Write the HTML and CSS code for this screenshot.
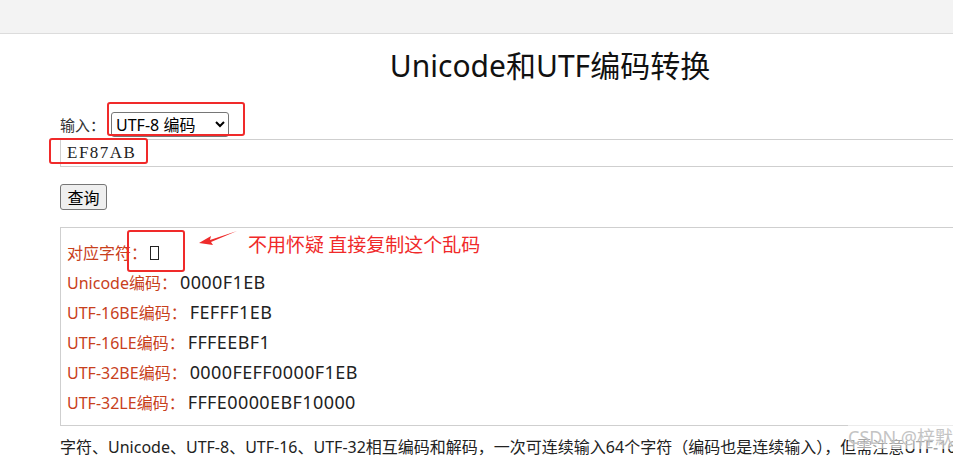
FILE: index.html
```html
<!DOCTYPE html>
<html lang="zh-CN">
<head>
    <meta charset="UTF-8">
    <meta name="viewport" content="width=device-width, initial-scale=1.0">
    <title>Unicode和UTF编码转换</title>
    <link rel="stylesheet" href="styles.css">
</head>
<body>
    <div class="top-bar"></div>

    <div class="tool-container">
        <h1 class="tool-title">Unicode和UTF编码转换</h1>

        <div class="input-row">
            <label for="input-type">输入：</label>
            <select id="input-type" class="type-select">
                <option>UTF-8 编码</option>
                <option>字符</option>
                <option>Unicode编码</option>
            </select>
        </div>
        <input type="text" class="code-input" value="EF87AB">

        <button class="query-btn">查询</button>

        <div class="result-box">
            <div class="result-row"><span class="result-label">对应字符：</span><span class="result-value"><span class="tofu"></span></span></div>
            <div class="result-row"><span class="result-label">Unicode编码：</span><span class="result-value">0000F1EB</span></div>
            <div class="result-row"><span class="result-label">UTF-16BE编码：</span><span class="result-value">FEFFF1EB</span></div>
            <div class="result-row"><span class="result-label">UTF-16LE编码：</span><span class="result-value">FFFEEBF1</span></div>
            <div class="result-row"><span class="result-label">UTF-32BE编码：</span><span class="result-value">0000FEFF0000F1EB</span></div>
            <div class="result-row"><span class="result-label">UTF-32LE编码：</span><span class="result-value">FFFE0000EBF10000</span></div>
        </div>

        <p class="tool-desc">字符、Unicode、UTF-8、UTF-16、UTF-32相互编码和解码，一次可连续输入64个字符（编码也是连续输入），但需注意UTF-16编码时的字节顺序。</p>
    </div>

    <!-- screenshot annotations -->
    <div class="mark mark-select"></div>
    <div class="mark mark-input"></div>
    <div class="mark mark-char"></div>
    <svg class="mark-arrow" width="44" height="20" viewBox="0 0 44 20">
        <path d="M39 2 L12 11 L13 7 L1 14 L15 16 L13 13 Z" fill="#ee2b2b"/>
    </svg>
    <div class="mark-note">不用怀疑 直接复制这个乱码</div>
    <div class="watermark">CSDN @梓默</div>
</body>
</html>
```

FILE: styles.css
```css
* {
    margin: 0;
    padding: 0;
    box-sizing: border-box;
}

body {
    font-family: "Noto Sans", "Noto Sans CJK SC", sans-serif;
    background: #fff;
    color: #333;
    overflow: hidden;
    height: 456px;
    position: relative;
}

.top-bar {
    height: 34px;
    background: #f3f3f3;
    border-bottom: 1px solid #dcdcdc;
}

.tool-container {
    width: 980px;
    margin-left: 60px;
}

.tool-title {
    text-align: center;
    font-size: 30px;
    font-weight: 400;
    line-height: 36px;
    color: #111;
    margin-top: 14px;
}

.input-row {
    display: flex;
    align-items: center;
    margin-top: 28px;
    height: 25px;
    font-size: 15px;
}

.type-select {
    width: 118px;
    height: 25px;
    margin-left: 6px;
    font-size: 16px;
    font-family: "Noto Sans", "Noto Sans CJK SC", sans-serif;
    color: #000;
    border: 1px solid #767676;
    border-radius: 3px;
    background: #fff;
}

.code-input {
    display: block;
    width: 100%;
    height: 28px;
    margin-top: 2px;
    padding: 0 6px;
    border: 1px solid #cfcfcf;
    font-family: "Liberation Serif", serif;
    font-size: 17px;
    letter-spacing: 1.5px;
    color: #222;
    outline: none;
}

.query-btn {
    display: block;
    margin-top: 17px;
    width: 47px;
    height: 26px;
    font-size: 16px;
    font-family: "Noto Sans CJK SC", sans-serif;
    color: #000;
    background: #efefef;
    border: 1px solid #767676;
    border-radius: 3px;
}

.result-box {
    margin-top: 17px;
    height: 199px;
    border: 1px solid #cfcfcf;
    padding: 9px 6px;
}

.result-row {
    display: flex;
    align-items: center;
    height: 30px;
}

.result-label {
    font-size: 16px;
    color: #c8401c;
}

.result-value {
    font-size: 18px;
    letter-spacing: 0.4px;
    color: #222;
    margin-left: 3px;
}

.tofu {
    display: inline-block;
    width: 9px;
    height: 14px;
    border: 1px solid #222;
    vertical-align: -1px;
}

.tool-desc {
    margin-top: 10px;
    font-size: 16px;
    line-height: 22px;
    white-space: nowrap;
    color: #222;
}

.mark {
    position: absolute;
    border: 2px solid #f02a2a;
    border-radius: 3px;
}

.mark-select {
    left: 107px;
    top: 102px;
    width: 138px;
    height: 34px;
}

.mark-input {
    left: 49px;
    top: 138px;
    width: 99px;
    height: 26px;
}

.mark-char {
    left: 127px;
    top: 230px;
    width: 58px;
    height: 42px;
}

.mark-arrow {
    position: absolute;
    left: 198px;
    top: 229px;
}

.mark-note {
    position: absolute;
    left: 248px;
    top: 231px;
    font-size: 19px;
    line-height: 26px;
    color: #f02a2a;
    font-family: "Noto Sans CJK SC", sans-serif;
}

.watermark {
    position: absolute;
    right: 0;
    top: 425px;
    font-size: 18px;
    line-height: 24px;
    color: #c4c4c4;
    background: rgba(255, 255, 255, 0.6);
    font-family: "Noto Sans", "Noto Sans CJK SC", sans-serif;
}
```
